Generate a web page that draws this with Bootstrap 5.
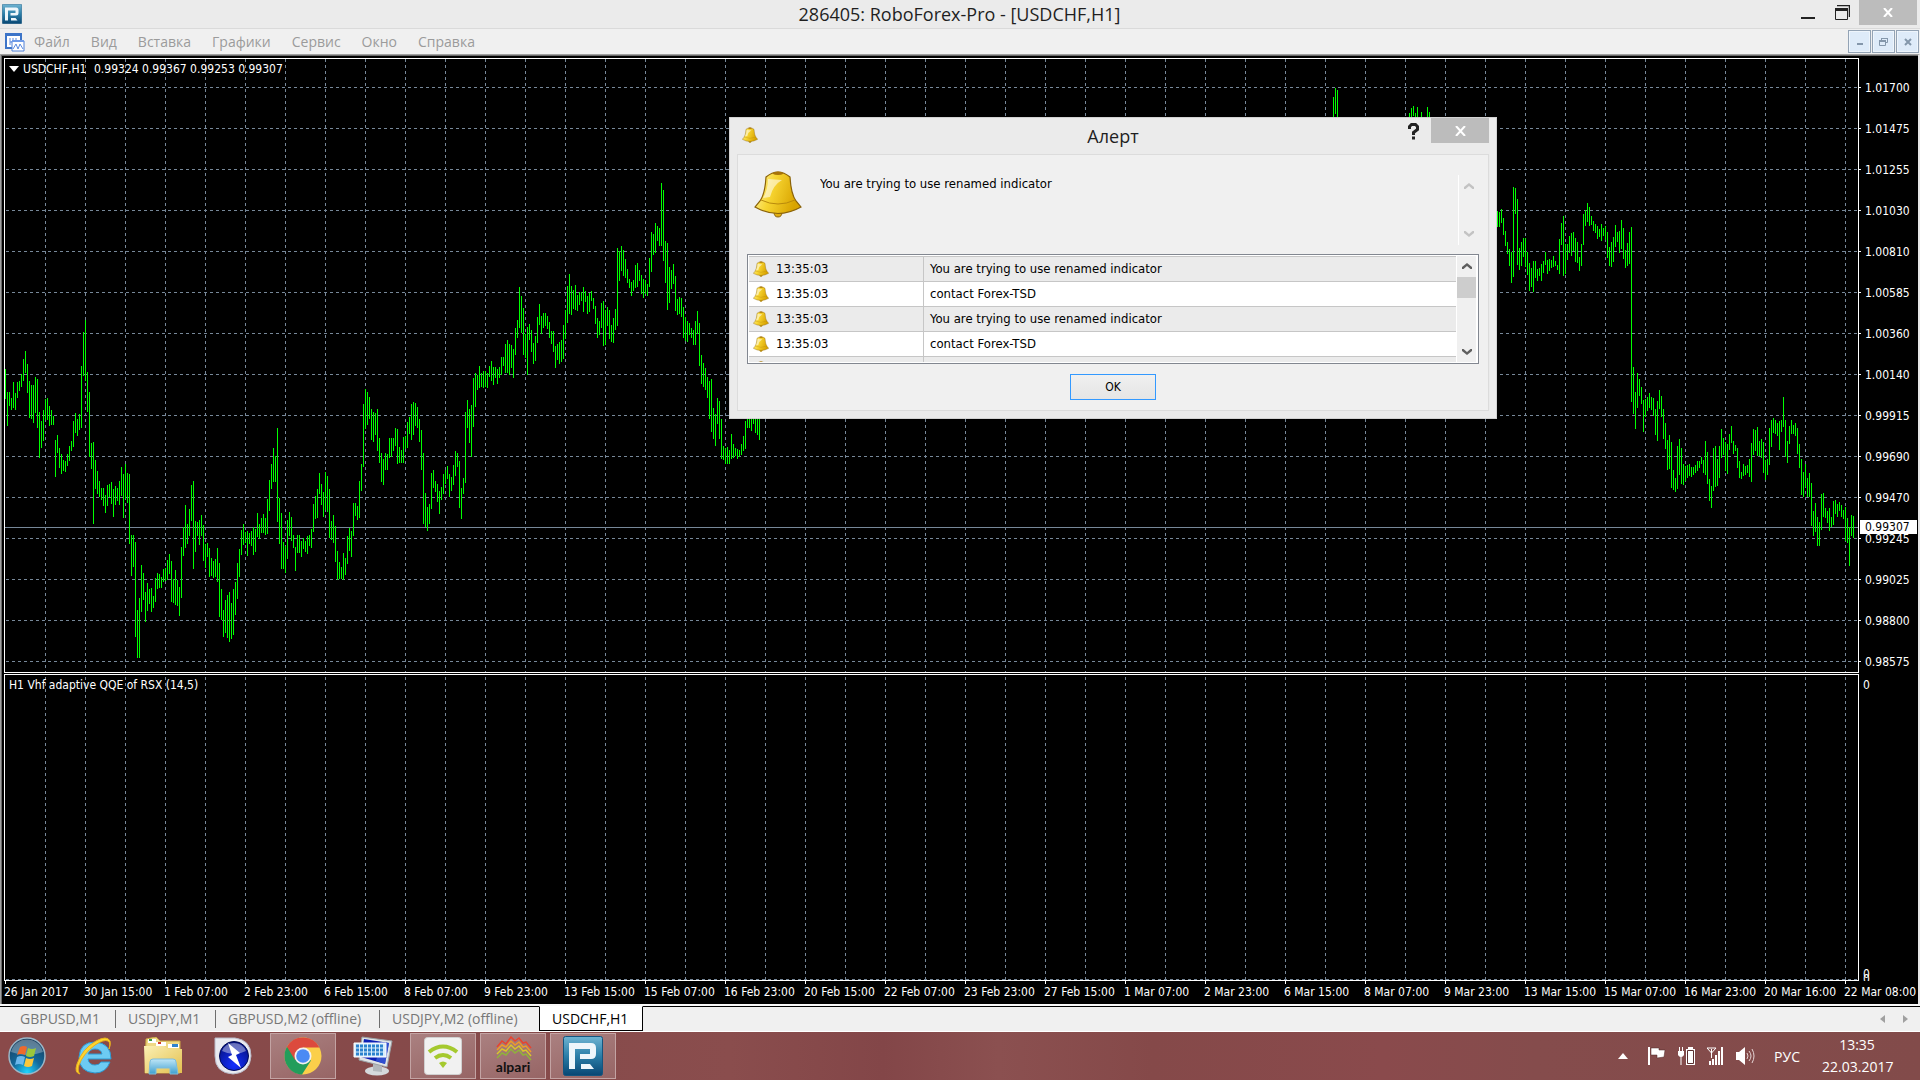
<!DOCTYPE html>
<html lang="ru">
<head>
<meta charset="utf-8">
<meta name="viewport" content="width=device-width, initial-scale=1">
<title>286405: RoboForex-Pro - [USDCHF,H1]</title>
<link rel="stylesheet" href="https://cdn.jsdelivr.net/npm/bootstrap@5.3.0/dist/css/bootstrap.min.css">
<style>
:root{--ui:"Open Sans","Noto Sans",sans-serif;--small:"DejaVu Sans Condensed","DejaVu Sans",sans-serif}
body{font-family:var(--ui);background:#000;color:#000;overflow:hidden}
button{font-family:inherit}
svg{display:block;flex:none}
.titlebar{height:28px;background:#ebebeb;color:#1f1f1f;font-size:18px;line-height:28px;padding:0 3px 0 2px}
.app-title{padding-left:106px}
.win-btn{border:0;background:transparent;padding:0;display:flex;align-items:center;justify-content:center}
.win-close{width:58px;height:25px;background:#bcbcbc}
.win-icon{width:34px;height:25px}
.menubar{height:26px;background:#f0f0f0;border-top:1px solid #dadada;padding:0 1px 0 5px}
.menubar a{color:#9b9b9b;font-size:14px;line-height:24px;text-decoration:none}
.menu-items{gap:21px;margin-left:9px}
.mdi-group{gap:1px}
.mdi-btn{width:23px;height:23px;border:1px solid #93a3b5;background:#deebf9;box-shadow:inset 0 0 0 1px #eef5fc;padding:0;display:flex;align-items:center;justify-content:center}
.stage{border-top:1px solid #a0a0a0;border-left:1px solid #a0a0a0;border-right:2px solid #e6e6e6;background:#000;min-height:0}
.stage-in{border-top:1px solid #696969;border-left:1px solid #696969;padding:2px 0 0 2px;font-family:var(--small);font-size:12px;color:#fff;min-width:0;min-height:0}
.pane{min-width:0;border:1px solid #fff;overflow:hidden}
.pane>svg{width:100%;height:100%}
.row-price{height:615px;margin-bottom:1px}
.pane-cap{left:4px;top:2px;line-height:16px;white-space:pre}
.cap-name{width:71px}
.axis{width:59px;overflow:hidden}
.axis-price{padding-top:9px}
.tick{line-height:42px;height:41px;display:flex;align-items:center}
.tick::before{content:"";width:2px;height:1px;background:#fff;margin-right:4px}
.price-tag{left:1px;top:462px;width:57px;height:14px;line-height:14px;background:#fff;color:#000;padding-left:5px}
.zero{line-height:14px;padding-left:4px}
.zero-low{margin:-9px 0 -5px}
.dates{height:23px;overflow:hidden;padding-left:1px}
.dates div{width:80px;flex:none;white-space:nowrap;line-height:16px}
.dates div::before{content:"";display:block;width:1px;height:3px;background:#fff}
.dates span{margin-left:-1px}
.tabs-bar{height:28px;background:#f0f0f0;border-top:2px solid #f8f8f8;border-bottom:1px solid #fff;font-size:14px;line-height:22px}
.tabs-in{border-top:1px solid #000;padding-left:7px}
.sheet{border:0;background:transparent;color:#777;padding:0 13px;position:relative;white-space:nowrap;line-height:20px;height:23px;text-align:left}
.sheet+.sheet::before{content:"";position:absolute;left:0;top:3px;width:1px;height:18px;background:#6e6e6e}
.sheet.current{background:#fff;color:#000;border:1px solid #000;border-top-color:#fff;margin-top:-1px;height:25px;padding:0 12px;width:104px}
.sheet.current::before{display:none}
.sheet-1{width:108px}.sheet-2{width:100px}.sheet-3{width:164px}.sheet-4{width:160px}
.tasks{height:48px;background:linear-gradient(90deg,#8a4a4a 0,#854a4a 25%,#8a4d4d 38%,#834648 46%,#8b5050 52%,#854949 60%,#8a4a4c 72%,#854c4c 80%,#824b4a 100%);color:#fff;font-size:14px}
.task{width:66px;height:46px;margin-top:1px;border:1px solid transparent;background:transparent;padding:0;display:flex;align-items:center;justify-content:center}
.task.open{border-color:#c3a3a3;background:linear-gradient(160deg,#aa8080,#976565)}
.start{width:54px;margin-right:6px}
.tray{gap:11px;padding-right:28px}
.clock{line-height:22px;width:70px;margin-left:11px;white-space:nowrap}
.dialog-win{left:729px;top:117px;width:768px;background:#ebebeb;border:1px solid #d2d2d2;padding:0 7px 7px}
.dialog-head{height:36px}
.dialog-icon{margin:9px 0 0 5px}
.help-btn{width:20px;height:26px}
.dialog-title{font-size:18px;line-height:36px;color:#1f1f1f}
.dialog-panel{background:#f0f0f0;border:1px solid #dcdcdc;padding:0 9px 10px;font-family:var(--small);font-size:13px}
.msg{height:99px;padding:15px 0 9px 7px}
.msg textarea{border:0;background:transparent;resize:none;outline:0;padding:5px 0 0;margin-left:18px;line-height:18px;overflow:hidden;color:#000;flex:1}
.msg-scroll{width:21px;border-left:1px solid #fff;margin-top:5px;padding:8px 0}
.alerts{height:110px;border:1px solid #828790;background:#fff;padding:1px}
.alerts table{flex:1;border-collapse:separate;border-spacing:0;align-self:flex-start}
.alerts tr:nth-child(odd) td{background:#ebebeb}
.alerts td{height:25px;border-top:1px solid #c6c6c6;padding:0 0 0 6px;line-height:24px}
.alerts td:first-child{width:175px;border-right:1px solid #c6c6c6;padding-left:4px}
.alert-bell{margin-right:7px}
.bar-col{width:21px;border-left:1px solid #fff;background:#f0f0f0;border-right:1px solid #fff;padding:7px 0}
.thumb{width:19px;height:21px;background:#cdcdcd;margin-top:7px}
.tone-off{color:#c3c3c3}.tone-on{color:#5f5f5f}
.ok-btn{width:86px;height:26px;border:1px solid #3399ff;background:linear-gradient(#f0f0f0,#e5e5e5);padding:0;margin-top:10px;line-height:25px;font-size:12px}
</style>
<script src="https://cdn.jsdelivr.net/npm/bootstrap@5.3.0/dist/js/bootstrap.bundle.min.js"></script>
</head>
<body>
<svg width="0" height="0" class="position-absolute" aria-hidden="true">
<defs>
<linearGradient id="gold" x1="0" x2="1" y1="0" y2=".3"><stop offset="0" stop-color="#fff6b0"/><stop offset=".45" stop-color="#f7d531"/><stop offset="1" stop-color="#d9a400"/></linearGradient>
<linearGradient id="teal" x1="0" x2="0" y1="0" y2="1"><stop offset="0" stop-color="#6fb4d2"/><stop offset=".5" stop-color="#2b7ea8"/><stop offset="1" stop-color="#084673"/></linearGradient>
<linearGradient id="folder" x1="0" x2="1" y1="0" y2="1"><stop offset="0" stop-color="#fbf0b4"/><stop offset="1" stop-color="#e3c04f"/></linearGradient>
<linearGradient id="sky" x1="0" x2="0" y1="0" y2="1"><stop offset="0" stop-color="#bfe6f7"/><stop offset="1" stop-color="#3f9fcf"/></linearGradient>
<radialGradient id="orb" cx=".5" cy=".95" r=".9"><stop offset="0" stop-color="#20d5ff"/><stop offset=".45" stop-color="#136a9c"/><stop offset="1" stop-color="#173f60"/></radialGradient>
<radialGradient id="blue" cx=".5" cy=".8" r=".8"><stop offset="0" stop-color="#1430ff"/><stop offset="1" stop-color="#04107e"/></radialGradient>
<symbol id="bell" viewBox="0 0 48 48">
<path d="M20 42q0 5 4 5t4-5z" fill="#e0ad12" stroke="#8a6209"/>
<path d="M12 7Q24-3 36 7q1 17 6 24l5 6Q24 50 1 37l5-6q5-7 6-24z" fill="url(#gold)" stroke="#8a6209" stroke-width="1.2"/>
<path d="M18 3.500q6-4 12 0-6 3-12 0z" fill="#a87408"/>
<path d="M7 30q17 8 34 0" fill="none" stroke="#b98a0c"/>
<path d="M14 9l14 1q-9 5-12 17l-7 1q5-8 5-19z" fill="#fff" opacity=".55"/>
</symbol>
<symbol id="robo" viewBox="0 0 40 40"><rect x=".5" y=".5" width="39" height="39" rx="2" fill="url(#teal)" stroke="#14557f"/><path d="M6 33V7h22q5 0 5 5v6q0 5-5 5H17v-5h10v-5H12v20zM18 28h9l4 5H18z" fill="#eef6fb"/></symbol>
<symbol id="up" viewBox="0 0 10 7"><path d="M0 6V4l5-4 5 4v2H8.500L5 3 1.500 6z" fill="currentColor"/></symbol>
<symbol id="down" viewBox="0 0 10 7"><path d="M0 1v2l5 4 5-4V1H8.500L5 4 1.500 1z" fill="currentColor"/></symbol>
</defs>
</svg>

<div class="vh-100 d-flex flex-column">
<header class="titlebar d-flex align-items-center">
<svg width="20" height="20"><use href="#robo"/></svg>
<div class="app-title flex-fill text-center">286405: RoboForex-Pro - [USDCHF,H1]</div>
<div class="d-flex align-self-start">
<button class="win-btn win-icon" aria-label="Свернуть"><svg width="14" height="14"><path d="M0 11h14v2H0z" fill="#222"/></svg></button>
<button class="win-btn win-icon" aria-label="Восстановить"><svg width="15" height="16"><path d="M2 .500h12.500V12" fill="none" stroke="#222" stroke-width="1.500"/><path d="M.500 3.500h12v11H.500z" fill="none" stroke="#222"/><path d="M0 3h13v3H0z" fill="#222"/></svg></button>
<button class="win-btn win-close" aria-label="Закрыть"><svg width="10" height="9"><path d="M1 0l8 9M9 0L1 9" stroke="#fff" stroke-width="2"/></svg></button>
</div>
</header>

<nav class="menubar d-flex align-items-center">
<svg width="20" height="20"><path d="M1 2h15v14H1z" fill="#fff" stroke="#3c74c8" stroke-width="2"/><path d="M1 1h15v3H1z" fill="#3c74c8"/><path d="M5 6v7m0-3h3m0-4v8m3-8v5" stroke="#5b8be0"/><path d="M7 9h12v10H7z" fill="#fff" stroke="#4f80d8"/><path d="M7 8h12v2H7z" fill="#6f9be8"/><path d="M8 17l3-5 2 5 2-5 3 5" fill="none" stroke="#5b8be0"/></svg>
<div class="menu-items d-flex flex-fill">
<a href="#">Файл</a><a href="#">Вид</a><a href="#">Вставка</a><a href="#">Графики</a><a href="#">Сервис</a><a href="#">Окно</a><a href="#">Справка</a>
</div>
<div class="mdi-group d-flex">
<button class="mdi-btn" aria-label="Свернуть график"><svg width="8" height="9"><path d="M1 6h6v2H1z" fill="#8497ab"/></svg></button>
<button class="mdi-btn" aria-label="Восстановить график"><svg width="9" height="9"><path d="M2.500 3V1.500h6v4H7M.500 4h6v4.500h-6z" fill="none" stroke="#8497ab"/><path d="M2 1h7v1H2zM0 3h7v2H0z" fill="#8497ab"/></svg></button>
<button class="mdi-btn" aria-label="Закрыть график"><svg width="8" height="8"><path d="M1 1l6 6M7 1L1 7" stroke="#8497ab" stroke-width="2"/></svg></button>
</div>
</nav>

<main class="stage flex-fill d-flex">
<div class="stage-in flex-fill d-flex flex-column">
<div class="row-price d-flex flex-shrink-0">
<div class="pane flex-fill position-relative">
<svg id="price" role="img" aria-label="USDCHF,H1"></svg>
<div class="pane-cap position-absolute d-flex"><svg class="align-self-center me-1" width="10" height="6"><path d="M0 0h10L5 6z" fill="#fff"/></svg><span class="cap-name">USDCHF,H1</span><span>0.99324 0.99367 0.99253 0.99307</span></div>
</div>
<div class="axis axis-price position-relative" id="prices"><div class="price-tag position-absolute">0.99307</div></div>
</div>
<div class="d-flex flex-fill">
<div class="pane flex-fill position-relative">
<svg id="indicator" role="img" aria-label="Vhf adaptive QQE of RSX"></svg>
<div class="pane-cap position-absolute">H1 Vhf adaptive QQE of RSX (14,5)</div>
</div>
<div class="axis d-flex flex-column"><div class="zero mt-1">0</div><div class="zero mt-auto">0</div><div class="zero zero-low">0</div></div>
</div>
<div class="dates d-flex" id="dates"></div>
</div>
</main>

<div class="tabs-bar">
<div class="tabs-in d-flex">
<button class="sheet sheet-1">GBPUSD,M1</button><button class="sheet sheet-2">USDJPY,M1</button><button class="sheet sheet-3">GBPUSD,M2 (offline)</button><button class="sheet sheet-4">USDJPY,M2 (offline)</button><button class="sheet current">USDCHF,H1</button>
<div class="ms-auto d-flex align-items-center gap-3 pe-2 me-1"><svg width="6" height="8"><path d="M5 0v8L0 4z" fill="#a0a0a0"/></svg><svg width="6" height="8"><path d="M1 0v8l5-4z" fill="#a0a0a0"/></svg></div>
</div>
</div>

<footer class="tasks d-flex">
<button class="task start" aria-label="Пуск"><svg width="38" height="38"><circle cx="19" cy="19" r="18" fill="url(#orb)" stroke="#9cb6c6" stroke-width="1.500"/><path d="M3 15a16.500 16.500 0 0 1 32 0q-16 6-32 0z" fill="#fff" opacity=".3"/><path d="M12 10q4-2 7 0l-2 8q-4-2-8 0z" fill="#ee6a2c"/><path d="M20 11q4 2 8 0l-2 8q-4 2-8 0z" fill="#9cc73b"/><path d="M9 20q4-2 8 0l-2 8q-4-2-8 0z" fill="#6bb8ec"/><path d="M18 21q4 2 8 0l-2 8q-4 2-8 0z" fill="#fbc83a"/></svg></button>
<div class="d-flex gap-1">
<button class="task" aria-label="Internet Explorer"><svg width="40" height="38"><path d="M38 22H15q1 6 7 6 4 0 6-3h9q-4 11-15 11Q6 35 6 20 7 5 22 5q16 1 16 17zM29 17q-1-5-7-5-5 0-7 5z" fill="#6dcbf3" stroke="#2b9ad4"/><path d="M7 37q-6-1-3-10Q9 12 23 4q11-6 14 0 1 3-1 8 2-6-1-8-4-2-13 4Q10 17 6 28q-2 6 1 9z" fill="#ffd52e" stroke="#e8b01c"/></svg></button>
<button class="task" aria-label="Проводник"><svg width="40" height="38"><path d="M3 2l10-2 4 4h20v32H2z" fill="#efd985" stroke="#c9a544"/><path d="M5 2h8v4H5z" fill="#fff"/><path d="M6 2h3v2H6z" fill="#3a9a40"/><path d="M13 5h10v4H13z" fill="#fff"/><path d="M15 5h3v2h-3z" fill="#d23b2b"/><path d="M25 7h11v4H25z" fill="#fff"/><path d="M29 7h6v3h-6z" fill="#2f83cd"/><path d="M1 9h20l4 3h14v24H2z" fill="url(#folder)"/><path d="M6 37l1-12q0-3 3-3h20q3 0 3 3l2 12h-8v-6H13v6z" fill="url(#sky)" stroke="#7fbddc"/></svg></button>
<button class="task" aria-label="Молния"><svg width="38" height="38"><path d="M1 1h20q16 2 16 18-1 17-18 18Q1 36 1 19z" fill="#e9eaf0" stroke="#b9b9c8"/><circle cx="20" cy="19" r="14.500" fill="url(#blue)" stroke="#000a55"/><path d="M8 14a13 13 0 0 1 24 0q-12 6-24 0z" fill="#fff" opacity=".4"/><path d="M14 6l12 10-4 2 5 13-13-11 4-2z" fill="#fff"/></svg></button>
<button class="task open" aria-label="Chrome"><svg width="38" height="38" viewBox="0 0 38 38"><circle cx="19" cy="19" r="18.500" fill="#fbcf4a"/><path d="M3 9.700A18.500 18.500 0 0 0 18 37.500l9-14-8-4z" fill="#239d5b"/><path d="M3 9.700L11 23l8-4V10.500H35.500A18.500 18.500 0 0 0 3 9.700z" fill="#dc4a3d"/><circle cx="19" cy="19" r="8.500" fill="#f3f1ee"/><circle cx="19" cy="19" r="6.800" fill="#4a8af4"/></svg></button>
<button class="task" aria-label="Экранная клавиатура"><svg width="40" height="40"><ellipse cx="24" cy="35" rx="12" ry="4.500" fill="#d5d9dc"/><path d="M20 26l9 2v8l-9-1z" fill="#b3b8bc"/><path d="M9 1l30 4-5 26-28-7z" fill="#dfe3e5" stroke="#9ba1a6"/><path d="M11 3l25 4-4 21-24-7z" fill="#0b1fb4"/><path d="M28 6l8 1-4 21-9-3z" fill="#3e64dc" opacity=".7"/><path d="M1 7h32v14H1z" fill="#d9eefb" stroke="#fff"/><path d="M3 10h28M3 14h28M3 18h28" stroke="#2b82ce" stroke-width="3" stroke-dasharray="3 1"/></svg></button>
<button class="task open" aria-label="Wi-Fi"><svg width="38" height="38"><rect x=".5" y=".5" width="37" height="37" rx="3" fill="#f1f1f1" stroke="#d0d0d0"/><path d="M5 15q14-11 28 0M11 21q8-6 16 0" fill="none" stroke="#a5c92e" stroke-width="4"/><path d="M15 26q4-3 8 0l-4 5z" fill="#a5c92e"/></svg></button>
<button class="task open" aria-label="alpari"><svg width="40" height="40"><g fill="none" stroke-width="1.500"><path d="M4 11l5-6 4 3 5-7 4 4 4-3 4 5 3-1 5 6" stroke="#e8432e"/><path d="M4 14l5-5 4 2 5-6 4 4 4-3 4 5 3-1 5 6" stroke="#ee9b2a"/><path d="M4 18l5-5 4 2 5-6 4 4 4-3 4 5 3-1 5 6" stroke="#d8c52c"/><path d="M4 22l5-5 4 2 5-6 4 4 4-3 4 5 3-1 5 6" stroke="#8fb33a"/></g><text x="20" y="36" text-anchor="middle" font-family="Lato,sans-serif" font-weight="700" font-size="14" fill="#111">alpari</text></svg></button>
<button class="task open" aria-label="RoboForex"><svg width="40" height="40"><use href="#robo"/></svg></button>
</div>
<div class="tray ms-auto d-flex align-items-center">
<svg width="10" height="6" class="me-2"><path d="M0 6h10L5 0z" fill="#fff"/></svg>
<svg width="20" height="20"><path d="M2 1v18" stroke="#fff" stroke-width="2"/><path d="M4 2h8v2h6l-1 7-7 1V9H4z" fill="#fff" stroke="#4a2525" stroke-width=".5"/></svg>
<svg width="18" height="20"><path d="M1.500 1v4m3-4v4M3 10v9" stroke="#fff"/><path d="M0 5h6v4q-1 2-3 2T0 9z" fill="#fff"/><path d="M8 3h9v16H8zM10 1h5v2h-5z" fill="#fff"/><path d="M9.500 4.500h6v13h-6z" fill="#fff" stroke="#5a3030"/></svg>
<svg width="17" height="18"><path d="M0 1h9L4.500 6zM4.500 2v9" fill="none" stroke="#fff"/><path d="M2 14h2v4H2zm3-2h2v6H5zm3-4h2v10H8zm3-4h2v14h-2zm3-4h2v18h-2z" fill="#fff"/></svg>
<svg width="20" height="20"><path d="M1 6h3l6-5v18l-6-5H1z" fill="#fff"/><path d="M12 7q2 3 0 6m2-8q4 5 0 10m3-12q4 7 0 14" fill="none" stroke="#e5d5d5"/></svg>
<span class="ms-2">РУС</span>
<div class="clock text-center">13:35<br>22.03.2017</div>
</div>
</footer>
</div>

<section class="dialog-win position-absolute" role="dialog" aria-labelledby="dlg">
<div class="dialog-head d-flex position-relative">
<svg width="16" height="16" class="dialog-icon"><use href="#bell"/></svg>
<div id="dlg" class="dialog-title position-absolute start-50 translate-middle-x">Алерт</div>
<button class="win-btn help-btn ms-auto me-2" aria-label="Справка"><svg width="11" height="17"><path d="M1.500 6V3.500l2-2h4l2 2v3L5.500 9.500V12M4 15h3" fill="none" stroke="#222" stroke-width="3"/></svg></button>
<button class="win-btn win-close" aria-label="Закрыть окно"><svg width="11" height="10"><path d="M1 0l9 10M10 0L1 10" stroke="#fff" stroke-width="2"/></svg></button>
</div>
<div class="dialog-panel">
<div class="msg d-flex">
<svg width="48" height="48"><use href="#bell"/></svg>
<textarea readonly aria-label="Сообщение">You are trying to use renamed indicator</textarea>
<div class="msg-scroll tone-off d-flex flex-column align-items-center justify-content-between"><svg width="10" height="7"><use href="#up"/></svg><svg width="10" height="7"><use href="#down"/></svg></div>
</div>
<div class="alerts d-flex">
<div class="flex-fill overflow-hidden d-flex"><table><tbody id="rows"></tbody></table></div>
<div class="bar-col tone-on d-flex flex-column align-items-center"><svg width="10" height="7"><use href="#up"/></svg><div class="thumb"></div><svg width="10" height="7" class="mt-auto"><use href="#down"/></svg></div>
</div>
<div class="text-center"><button class="ok-btn">OK</button></div>
</div>
</section>

<script>
// Hourly bars, one every 2px: first x, base y, then top/bottom pairs in thirds of a pixel below the base.
const runs=[
[5,310,"177 266 246 348 246 288 264 300 216 294 249 300 216 264 213 243 192 231 147 213 123 189 162 249 213 324 225 327 225 339 201 309 207 354 306 444 333 414 300 393 267 330 264 330 288 348 300 345 318 345 390 501 375 429 414 474 432 492 450 483 453 486 432 468 408 453 393 423 333 411 309 369 327 378 312 360 168 354 66 198 30 213 186 306 246 441 399 477 396 642 450 537 483 552 513 561 534 570 534 588 555 609 525 588 522 561 516 582 537 621 528 585 534 573 513 585 471 558 492 624 462 567 489 579 492 702 675 798 675 771 696 981 900 1044 864 1044 765 906 789 870 846 936 819 903 837 882 834 906 858 894 804 876 789 837 792 834 801 834 777 816 774 813 750 810 732 792 753 876 807 879 780 885 810 888 831 918 711 864 651 738 585 714 642 702 597 678 525 633 513 777 633 726 636 678 630 705 615 678 645 753 702 774 699 741 714 801 744 798 753 804 747 801 714 816 759 921 837 930 900 981 870 969 855 984 846 996 879 987 837 975 816 915 759 867 717 801 660 735 642 705 666 699 663 738 669 702 663 708 651 735 657 726 609 681 642 687 624 669 612 669 624 675 567 672 510 603 462 537 414 516 438 516 354 636 564 702 609 777 696 777 708 789 630 747 606 678 621 693 675 714 711 783 675 729 675 729 693 741 684 717 693 726 678 732 675 708 657 714 582 666 558 627 537 624 489 552 522 585 546 621 486 600 498 606 537 684 633 690 615 699 648 756 723 810 756 807 771 807 729 810 744 795 678 762 654 723 663 741 579 678 579 618 588 630 513 624 462 543 282 471 237 357 246 345 261 327 297 390 306 396 309 375 297 423 384 459 429 516 447 525 429 480 432 480 384 444 384 441 384 423 354 408 357 462 411 459"],
[401,150,"900 939 861 939 858 896 816 894 801 852 762 870 756 855 759 828 771 834 807 876 840 960 909 1122 1029 1131 1071 1143 1062 1122 969 1077 960 1014 993 1026 1002 1056 1023 1092 1011 1050 972 1032 960 1002 948 987 972 1042 981 1023 945 1005 903 978 909 951 933 1074 1014 1107 984 1032 786 999 750 834 777 879 765 921 684 831 669 771 675 720 648 714 669 711 663 714 663 711 669 714 648 681 633 693 651 705 651 684 657 702 651 684 621 675 621 648 582 669 570 669 582 675 585 654 597 684 534 615 510 564 411 534 438 549 474 615 552 624 531 675 522 570 540 606 579 642 558 633 501 579 462 525 498 552 489 534 489 528 498 537 516 564 543 582 543 606 588 654 582 630 576 642 570 636 525 627 480 567 408 519 372 492 408 495 420 477 405 480 435 483 426 465 426 453 411 486 423 456 438 492 429 486 423 453 444 477 468 522 504 564 513 555 459 534 453 588 480 585 471 528 480 567 525 576 504 579 477 540 294 528 303 393 288 363 300 378 327 384 357 399 387 414 396 438 390 423 345 414 339 411 360 393 375 432 387 444 390 432 402 438 324 411 246 366 252 315 219 309 228 273 234 288 99 288 120 333 273 399 279 480 351 459 360 417 342 402 378 483 447 495 441 492 444 501 471 564 501 573 513 576 519 555 534 564 540 585 513 585 483 552 519 648 615 702 639 711 654 720 681 744 693 807 687 846 774 867 792 888 744 822 753 867 807 927 888 930 894 942 891 942 900 942 852 927 882 924 894 918 897 927 900 921 882 915 858 903 813 897 780 834 780 834 780 843 780 822 780 849 780 855 780 870"],
[1333,0,"291 375 264 342 270 375"],
[1409,0,"339 375 324 375 318 348 339 375 321 375 354 375 336 375 354 375 354 375 321 375 336 375"],
[1497,0,"633 681 636 681 627 669 654 705 693 738 726 762 747 798 756 849 561 831 564 642 597 795 744 810 726 798 714 771 714 801 756 825 789 873 804 861 783 876 783 834 807 843 804 828 792 843 783 819 756 795 780 822 777 813 780 804 768 801 783 798 795 810 717 822 669 735 648 828 732 822 732 780 708 759 699 768 696 753 714 786 726 789 771 813 732 798 642 735 630 678 609 666 621 678 648 675 663 693 672 699 678 717 687 711 672 723 684 708 678 720 696 774 741 798 726 801 711 786 675 741 696 726 693 759 660 747 684 777 750 804 729 798 696 792 681 1206"],
[1633,340,"81 222 156 267 99 204 117 168 141 192 180 276 177 231 171 213 159 204 171 210 174 228 207 285 183 303 150 207 168 231 207 297 249 327 300 390 285 387 306 444 390 450 414 456 318 447 297 405 324 432 372 435 378 423 375 414 372 408 381 411 381 405 375 399 363 393 363 384 351 372 360 399 303 405 336 432 417 483 438 504 324 453 318 441 357 438 318 414 267 354 294 345 306 393 312 402 282 330 258 309 303 342 315 333 324 384 363 414 396 417 372 408 378 405 375 399 357 411 309 426 267 345 270 333 261 348 303 348 297 354 306 399 360 420 357 405 264 375 240 321 234 279 240 282 249 288 243 330 240 276 171 261 240 351 303 369 258 312 240 282 255 282 249 288 264 342 312 384 357 465 396 471 372 441 414 471 399 471 429 558 513 588 489 576 531 618 546 618 462 570 459 531 504 534 513 549 504 573 531 561 483 555 480 522 492 531 486 513 495 531 510 537 501 603 534 609 561 678 525 588 528 594"]];
let bars="";
for(const [x0,y0,s] of runs){const v=s.split(" ").map(n=>y0+Math.round(n/3));
 for(let i=0;i<v.length;i+=2)bars+=`M${x0+i} ${v[i]}h1V${v[i+1]}h-1z`;}
let vert="",horiz="";
for(let x=45;x<=1845;x+=40)vert+=`M${x}.5 59V981`;
for(let y=87;y<=661;y+=41)horiz+=`M6 ${y}.5H1858`;
const grid=d=>`<path d="${d}" stroke="#778899" stroke-dasharray="3 3" fill="none"/>`;
document.getElementById("price").innerHTML=`<g transform="translate(-5 -59)">${grid(vert)+grid(horiz)}<path d="M5 527.5H1859" stroke="#778899"/><path d="${bars}" fill="#00ff00"/></g>`;
document.getElementById("indicator").innerHTML=`<g transform="translate(-5 -675)">${grid(vert)+grid("M6 979.5H1858")}</g>`;
document.getElementById("prices").insertAdjacentHTML("afterbegin","1.01700 1.01475 1.01255 1.01030 1.00810 1.00585 1.00360 1.00140 0.99915 0.99690 0.99470 0.99245 0.99025 0.98800 0.98575".split(" ").map(p=>`<div class="tick">${p}</div>`).join(""));
document.getElementById("dates").innerHTML="26 Jan 2017,30 Jan 15:00,1 Feb 07:00,2 Feb 23:00,6 Feb 15:00,8 Feb 07:00,9 Feb 23:00,13 Feb 15:00,15 Feb 07:00,16 Feb 23:00,20 Feb 15:00,22 Feb 07:00,23 Feb 23:00,27 Feb 15:00,1 Mar 07:00,2 Mar 23:00,6 Mar 15:00,8 Mar 07:00,9 Mar 23:00,13 Mar 15:00,15 Mar 07:00,16 Mar 23:00,20 Mar 16:00,22 Mar 08:00".split(",").map(d=>`<div><span>${d}</span></div>`).join("");
document.getElementById("rows").innerHTML=["You are trying to use renamed indicator","contact Forex-TSD","You are trying to use renamed indicator","contact Forex-TSD",""].map(t=>`<tr><td><div class="d-flex align-items-center"><svg class="alert-bell" width="16" height="16"><use href="#bell"/></svg>${t&&"13:35:03"}</div></td><td>${t}</td></tr>`).join("");
</script>
</body>
</html>
